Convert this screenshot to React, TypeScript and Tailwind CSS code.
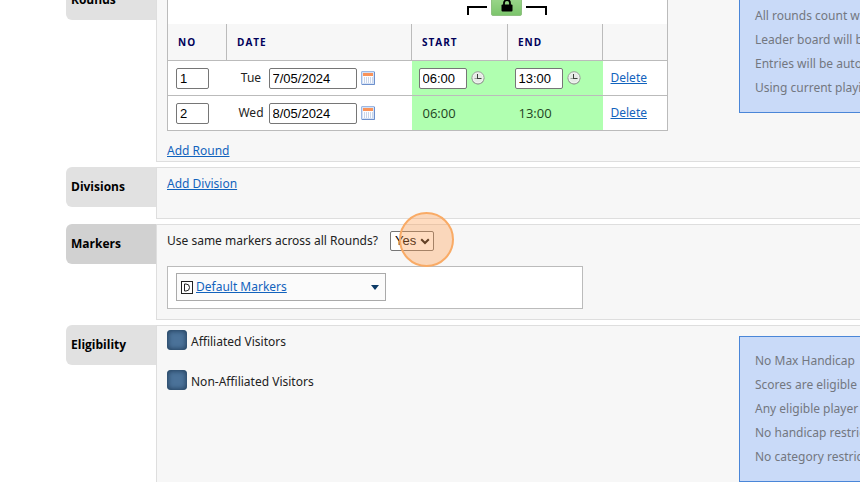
import { useState } from 'react';
import type { ReactNode } from 'react';
import { clsx } from 'clsx';

const ROUNDS = [
  { no: 1, day: 'Tue', date: '7/05/2024', start: '06:00', end: '13:00' },
  { no: 2, day: 'Wed', date: '8/05/2024', start: '06:00', end: '13:00' },
];

const ROUND_NOTES = [
  'All rounds count with',
  'Leader board will be',
  'Entries will be automatic',
  'Using current playing',
];

const ELIGIBILITY_NOTES = [
  'No Max Handicap',
  'Scores are eligible',
  'Any eligible player',
  'No handicap restrictions',
  'No category restrictions',
];

const VISITORS = ['Affiliated Visitors', 'Non-Affiliated Visitors'];

const linkClass = 'text-[#1263bd] underline';
const inputClass =
  'h-[21px] rounded-xs border border-[#767676] bg-white px-[3px] font-["Liberation_Sans",Arial,sans-serif] text-[13px] text-black';

function CalendarIcon() {
  return (
    <svg width="14" height="14" viewBox="0 0 14 14" aria-hidden="true">
      <rect x="0.5" y="0.5" width="13" height="13" rx="0.5" fill="#d5e2f6" stroke="#9db8e4" />
      <path d="M13.500 1v12.500H1" fill="none" stroke="#6d90cc" />
      <rect x="2" y="2" width="10" height="10" fill="#fdfdff" />
      <rect x="2" y="2" width="10" height="3" fill="#f9935a" />
      <path d="M3.500 6v6M5.500 6v6M7.500 6v6M9.500 6v6M11.500 6v6" stroke="#bccbe4" strokeWidth="0.8" />
    </svg>
  );
}

function ClockIcon() {
  return (
    <svg width="14" height="14" viewBox="0 0 14 14" aria-hidden="true">
      <circle cx="7" cy="7.3" r="6.2" fill="#8d948d" />
      <circle cx="7" cy="6.8" r="6.1" fill="#f1f3f1" stroke="#9aa29a" strokeWidth="1" />
      <circle cx="7" cy="6.8" r="4.6" fill="#e6ebe6" />
      <path d="M6.500 3v5M6 7.500h4.500" fill="none" stroke="#3c423c" />
      <path d="M3.500 7.500H6" stroke="#9aa29a" />
    </svg>
  );
}

function LockIcon() {
  return (
    <svg width="12" height="13" viewBox="0 0 12 13" aria-hidden="true">
      <path d="M3 6V4a3 3 0 0 1 6 0v2" fill="none" stroke="#000" strokeWidth="1.8" />
      <rect x="0.5" y="5.5" width="11" height="7" rx="1" fill="#000" />
    </svg>
  );
}

type SectionProps = {
  label: string;
  active?: boolean;
  className?: string;
  notes?: ReactNode;
  children: ReactNode;
};

function Section({ label, active, className, notes, children }: SectionProps) {
  return (
    <section className={clsx('flex items-start', className)}>
      <h2
        className={clsx(
          'flex h-10 w-[90px] shrink-0 items-center rounded-l-md pl-[5px] font-["Open_Sans",sans-serif] text-[12px] font-bold text-black',
          active ? 'bg-[#d1d1d1]' : 'bg-[#e1e1e1]'
        )}
      >
        {label}
      </h2>
      <div className="flex min-w-0 flex-1 items-start self-stretch border-y border-l border-[#dedede] bg-[#f7f7f7] pl-[10px]">
        <div className="w-[572px] shrink-0">{children}</div>
        {notes}
      </div>
    </section>
  );
}

function Notes({ items }: { items: string[] }) {
  return (
    <ul className="mt-[10px] min-w-[260px] flex-1 border border-[#4a86d8] bg-[#c9daf8] px-[15px] py-3 leading-6 whitespace-nowrap text-[#737780]">
      {items.map((item) => (
        <li key={item}>{item}</li>
      ))}
    </ul>
  );
}

function RoundsTable() {
  const headClass = 'border-r border-[#bbb] px-[10px] text-left';

  return (
    <table className="mt-[10px] w-[501px] table-fixed border-collapse border border-[#bbb] bg-white">
      <colgroup>
        <col className="w-[59px]" />
        <col className="w-[185px]" />
        <col className="w-[96px]" />
        <col className="w-[95px]" />
        <col className="w-[65px]" />
      </colgroup>
      <thead>
        <tr className="h-8">
          <td colSpan={2} />
          <td colSpan={2} className="align-top">
            <div className="flex items-end justify-center gap-1">
              <span className="mb-px h-[9px] w-5 border-t-2 border-l-2 border-black" />
              <button
                type="button"
                aria-label="Lock times"
                className="flex h-6 w-[31px] items-end justify-center rounded-xs border border-[#8fc181] bg-linear-to-b from-[#a5dc95] to-[#7cc56c] pb-[3px]"
              >
                <LockIcon />
              </button>
              <span className="mb-px h-[9px] w-[21px] border-t-2 border-r-2 border-black" />
            </div>
          </td>
          <td />
        </tr>
        <tr className="h-[37px] bg-[#f7f7f7] font-['Open_Sans',sans-serif] text-[10px] tracking-[1px] text-[#00005a] uppercase">
          <th className={headClass}>No</th>
          <th className={headClass}>Date</th>
          <th className={headClass}>Start</th>
          <th className={headClass}>End</th>
          <th className={headClass} aria-label="Actions" />
        </tr>
      </thead>
      <tbody>
        {ROUNDS.map((round, i) => (
          <tr key={round.no} className="h-[35px] border-t border-[#bbb]">
            <td className="pl-2">
              <input aria-label="Round number" defaultValue={round.no} className={clsx(inputClass, 'block w-[33px]')} />
            </td>
            <td className="pl-[11px]">
              <div className="flex items-center">
                <span className="w-[27px] text-center">{round.day}</span>
                <input
                  aria-label={`Round ${round.no} date`}
                  defaultValue={round.date}
                  className={clsx(inputClass, 'mx-1 w-[88px]')}
                />
                <button type="button" aria-label="Pick date">
                  <CalendarIcon />
                </button>
              </div>
            </td>
            {[round.start, round.end].map((time, col) => (
              <td key={col} className="bg-[#b0ffb0] pl-[7px]">
                {i === 0 ? (
                  <div className="flex items-center gap-1">
                    <input
                      aria-label={col === 0 ? 'Start time' : 'End time'}
                      defaultValue={time}
                      className={clsx(inputClass, 'w-12')}
                    />
                    <button type="button" aria-label="Pick time">
                      <ClockIcon />
                    </button>
                  </div>
                ) : (
                  <span className="pl-1 font-['Open_Sans',sans-serif] text-[13px] text-[#234423]">{time}</span>
                )}
              </td>
            ))}
            <td className="pl-2">
              <a href="#delete" className={linkClass}>
                Delete
              </a>
            </td>
          </tr>
        ))}
      </tbody>
    </table>
  );
}

function MarkersSelect() {
  const [sameMarkers, setSameMarkers] = useState('Yes');

  return (
    <div className="flex items-center gap-3 pt-1.5">
      <label htmlFor="same-markers">Use same markers across all Rounds?</label>
      <div className="relative">
        <select
          id="same-markers"
          value={sameMarkers}
          onChange={(e) => setSameMarkers(e.target.value)}
          className="block h-5 w-11 appearance-none rounded-xs border border-[#767676] bg-white pl-1 font-['Liberation_Sans',Arial,sans-serif] text-[13px] leading-4 text-black"
        >
          <option>Yes</option>
          <option>No</option>
        </select>
        <svg
          className="pointer-events-none absolute top-[7px] right-1"
          width="10"
          height="7"
          viewBox="0 0 10 7"
          aria-hidden="true"
        >
          <path d="M1.2 1.2 5 5l3.800-3.800" fill="none" stroke="#111" strokeWidth="2" />
        </svg>
        <span className="pointer-events-none absolute -top-[19px] left-[9px] size-[55px] rounded-full border-2 border-[#f9ab66] bg-[#ff9a4a]/35" />
      </div>
    </div>
  );
}

export default function App() {
  return (
    <main className="flex h-screen flex-col overflow-hidden bg-white pl-[66px] font-['Noto_Sans','Open_Sans',sans-serif] text-[12px] leading-5 text-[#222]">
      <Section label="Rounds" className="-mt-5 shrink-0" notes={<Notes items={ROUND_NOTES} />}>
        <RoundsTable />
        <a href="#add-round" className={clsx(linkClass, 'mt-[10px] inline-block align-top')}>
          Add Round
        </a>
      </Section>

      <Section label="Divisions" className="mt-[5px] shrink-0">
        <div className="pt-1.5 pb-6">
          <a href="#add-division" className={clsx(linkClass, 'inline-block align-top')}>
            Add Division
          </a>
        </div>
      </Section>

      <Section label="Markers" active className="mt-[5px] shrink-0">
        <MarkersSelect />
        <div className="mt-[15px] mb-[10px] w-[416px] border border-[#bbb] bg-white px-2 pt-1.5 pb-[7px]">
          <div className="flex h-7 w-[210px] items-center border border-[#aaa] bg-[#fbfbfb] px-1">
            <svg width="12" height="13" viewBox="0 0 12 13" aria-hidden="true">
              <rect x="0.5" y="0.5" width="11" height="12" fill="#fff" stroke="#222" />
              <path d="M3.500 3v7h1.500a3.500 3.500 0 0 0 0-7z" fill="none" stroke="#222" />
            </svg>
            <a href="#markers" className={clsx(linkClass, 'ml-[3px]')}>
              Default Markers
            </a>
            <button type="button" aria-label="Choose markers" className="ml-auto pr-0.5">
              <svg width="8" height="5" viewBox="0 0 8 5" aria-hidden="true">
                <path d="M0 0h8L4 5z" fill="#0b3a66" />
              </svg>
            </button>
          </div>
        </div>
      </Section>

      <Section
        label="Eligibility"
        className="mt-[5px] min-h-[180px] flex-1"
        notes={<Notes items={ELIGIBILITY_NOTES} />}
      >
        <div className="flex flex-col gap-[18px] pt-1">
          {VISITORS.map((visitor) => (
            <label key={visitor} className="flex items-start gap-1">
              <input
                type="checkbox"
                className="size-5 appearance-none rounded-sm bg-[#4b7299] shadow-[inset_0_0_5px_1px_#23405e]"
              />
              <span className="pt-0.5">{visitor}</span>
            </label>
          ))}
        </div>
      </Section>
    </main>
  );
}
